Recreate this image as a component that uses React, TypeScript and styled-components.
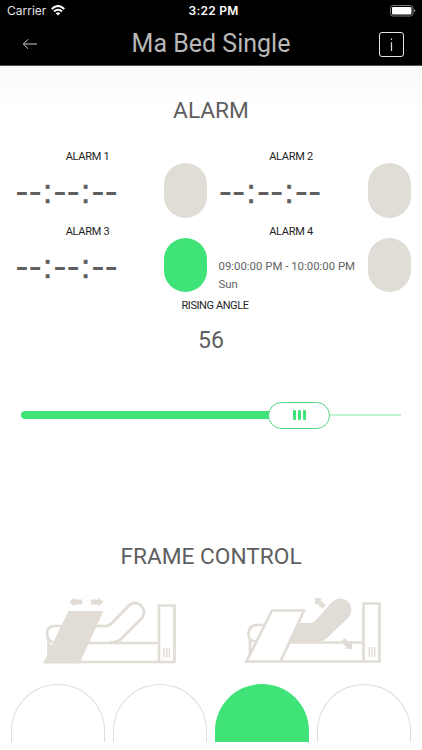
import React from 'react';
import styled, { createGlobalStyle } from 'styled-components';

const GREEN = '#40e378';
const STONE = '#e1dcd6';

const GlobalStyle = createGlobalStyle`
  * { box-sizing: border-box; }
  body { margin: 0; background: #fff; overflow: hidden; }
  button { appearance: none; padding: 0; margin: 0; border: 0; background: none; font: inherit; }
`;

const Screen = styled.div`
  width: 422px;
  height: 750px;
  display: flex;
  flex-direction: column;
  overflow: hidden;
  background: #fff;
  color: #5f5f5f;
  font-family: Roboto, 'Noto Sans', sans-serif;
`;

const Header = styled.header`
  height: 66px;
  flex: none;
  background: #000;
  color: #fff;
  border-bottom: 1px solid #555;
`;

const StatusBar = styled.div`
  height: 22px;
  display: grid;
  grid-template-columns: 1fr auto 1fr;
  align-items: center;
  padding: 0 6px 0 7px;
  font: 400 12px/22px Inter, sans-serif;
`;

const Carrier = styled.div`
  display: flex;
  align-items: center;
  gap: 5px;
  color: #e4e4e4;
  svg { margin-top: -1px; }
`;

const Clock = styled.div`
  font-weight: 600;
  font-size: 12px;
  letter-spacing: 0.24px;
  transform: translateX(2px);
`;

const Battery = styled.svg`
  justify-self: end;
`;

const NavBar = styled.div`
  height: 43px;
  display: grid;
  grid-template-columns: 60px 1fr 60px;
  align-items: center;
  padding-top: 1px;
`;

const BackButton = styled.button`
  display: flex;
  padding-left: 22px;
`;

const Title = styled.h1`
  margin: 0;
  text-align: center;
  color: #b8b8b8;
  font-weight: 400;
  font-size: 25px;
  line-height: 42px;
  white-space: nowrap;
`;

const InfoButton = styled.button`
  width: 25px;
  height: 25px;
  margin-left: 17px;
  display: flex;
  border: 1px solid #e6e6e6;
  border-radius: 3px;
`;

const Main = styled.main`
  flex: 1;
  display: flex;
  flex-direction: column;
  background: linear-gradient(#f9f9f9, #fff 38px);
`;

const Heading = styled.h2`
  margin: 0;
  height: 30px;
  text-align: center;
  font-weight: 400;
  font-size: 22.7px;
  line-height: 30px;
`;

const AlarmSection = styled.section`
  padding-top: 30px;
`;

const AlarmGrid = styled.div`
  display: grid;
  grid-template-columns: 203.5px 203.5px;
  grid-template-rows: 74.5px 74.5px;
  margin-top: 22px;
  padding-left: 7px;
`;

const Alarm = styled.div`
  display: grid;
  grid-template-columns: 157px 43px;
`;

const AlarmInfo = styled.div`
  display: flex;
  flex-direction: column;
`;

const Label = styled.div<{ $indent: number; $spacing: number }>`
  height: 16px;
  padding-left: ${(p) => p.$indent}px;
  text-align: center;
  color: #1e1e1e;
  font-size: 11px;
  line-height: 17.6px;
  letter-spacing: ${(p) => p.$spacing}px;
`;

const EmptyTime = styled.div`
  display: flex;
  margin: 8px 0 0 8.4px;
  height: 40px;
  line-height: 39px;
`;

const TimeGlyph = styled.span<{ $colon: boolean }>`
  width: ${(p) => (p.$colon ? 11.6 : 13.2)}px;
  display: flex;
  justify-content: center;
  font-family: ${(p) => (p.$colon ? "'Liberation Sans'" : "'DejaVu Sans'")}, sans-serif;
  font-size: ${(p) => (p.$colon ? 33 : 37)}px;
  -webkit-text-stroke: ${(p) => (p.$colon ? 0.6 : 0)}px #5f5f5f;
`;

const Schedule = styled.div`
  padding: 18px 0 0 8px;
  font-size: 11.4px;
  line-height: 18px;
  white-space: nowrap;
`;

const Toggle = styled.button<{ $on: boolean }>`
  width: 43px;
  height: 54.5px;
  margin-top: 15px;
  border-radius: 22px;
  background: ${(p) => (p.$on ? GREEN : '#e0dcd6')};
`;

const Rising = styled.section`
  margin-top: 0;
`;

const Angle = styled.div`
  height: 30px;
  margin-top: 13px;
  text-align: center;
  font-size: 23px;
  line-height: 30px;
`;

const Slider = styled.div`
  display: flex;
  align-items: center;
  height: 28px;
  margin: 45px 21px 0;
`;

const Filled = styled.div`
  width: 248px;
  height: 8px;
  margin-right: -1px;
  border-radius: 4px 0 0 4px;
  background: ${GREEN};
`;

const Handle = styled.div`
  width: 62px;
  height: 27px;
  display: flex;
  align-items: center;
  justify-content: center;
  gap: 2px;
  border: 1px solid #4fd581;
  border-radius: 14px;
  background: #fff;
`;

const Grip = styled.span`
  width: 3px;
  height: 10px;
  border-radius: 1px;
  background: ${GREEN};
`;

const Rest = styled.div`
  flex: 1;
  height: 2px;
  background: #c2f6d3;
`;

const FrameSection = styled.section`
  margin-top: 113px;
`;

const BedRow = styled.div`
  display: grid;
  grid-template-columns: 1fr 1fr;
  margin-top: 13px;
  height: 90px;
  svg { display: block; }
`;

const BedCell = styled.div<{ $left: number }>`
  padding-left: ${(p) => p.$left}px;
`;

const Presets = styled.div`
  display: grid;
  grid-template-columns: repeat(4, 94px);
  gap: 8px;
  height: 58.5px;
  margin: 8.5px 0 0 11.3px;
`;

const Preset = styled.button<{ $on: boolean }>`
  border: 1px solid ${(p) => (p.$on ? GREEN : '#e0ddda')};
  border-bottom: 0;
  border-radius: 47px 47px 0 0;
  background: ${(p) => (p.$on ? GREEN : '#fff')};
`;

const BedHead = () => (
  <svg width="160" height="90" viewBox="0 0 160 90">
    <g fill="none" stroke={STONE} strokeWidth="2.7">
      <path d="M32 41H25Q17 41 17 48Q17 56 23 57M64 41H75Q79 41 82 38L98.500 21C106 12 119 24 112 33L92 53Q88 57.500 80 57.500" />
      <path d="M18.500 52V76M55 58H129M46 77H144.500V20.500H129V77" />
    </g>
    <path fill={STONE} d="M38.500 26H73.500L49.500 78.500H13L18 69V57L22 60Z" />
    <path fill={STONE} d="M39 17l5-4.500v2h8v5h-8v2zM73 17l-5-4.500v2h-7.500v5H68v2z" transform="translate(.3 0)" />
    <path stroke={STONE} strokeWidth="1.400" d="M134 63v9.500M136.700 63v9.500M139.400 63v9.500" />
  </svg>
);

const BedBack = () => (
  <svg width="160" height="90" viewBox="0 0 160 90">
    <path fill={STONE} d="M65 38H74Q78 38 80 36L96 18C108 6 123 21 113 33L93 52Q88 57 82 57H54Z" />
    <g fill="none" stroke={STONE} strokeWidth="2.7">
      <path d="M29 40H22Q14 40 13.500 48Q13 56 20 56M15 53V69M54 57.500H128M47 76.500H144.500V18.500H128.500V76.500" />
      <path fill="#fff" d="M37 25.500H69L45.500 76.500H11.500Z" />
    </g>
    <path fill={STONE} d="M80 13l7.500.300-2 1.700 5.300 5.200-3.500 3.500-5.300-5.200-2 1.800zM117 64l-7.500-.300 2-1.800-5.500-5.400 3.500-3.500 5.500 5.400 2-1.900z" />
    <path stroke={STONE} strokeWidth="1.400" d="M134.300 62v10M137 62v10M139.700 62v10" />
  </svg>
);

const ALARMS = [
  { name: 'ALARM 1', on: false },
  { name: 'ALARM 2', on: false },
  { name: 'ALARM 3', on: true },
  { name: 'ALARM 4', on: false, time: '09:00:00 PM - 10:00:00 PM', days: 'Sun' },
];

export default function App() {
  return (
    <Screen>
      <GlobalStyle />
      <Header>
        <StatusBar>
          <Carrier>
            Carrier
            <svg width="14" height="11" viewBox="0 0 14 11">
              <g fill="none" stroke="#fff" strokeWidth="2">
                <path d="M.7 3.900Q7-1.900 13.300 3.900M3 6.500Q7 3 11 6.500" />
              </g>
              <path fill="#fff" d="M4.700 8.200Q7 6.500 9.300 8.200L7 10.500Z" />
            </svg>
          </Carrier>
          <Clock>3:22 PM</Clock>
          <Battery width="26" height="12" viewBox="0 0 26 12">
            <rect x=".5" y=".5" width="22.500" height="10.500" rx="2.500" fill="none" stroke="#777" />
            <rect x="2" y="2" width="19.500" height="7.500" rx="1" fill="#fff" />
            <path fill="#777" d="M24 4q1.500.5 1.500 1.800T24 7.600z" />
          </Battery>
        </StatusBar>
        <NavBar>
          <BackButton aria-label="Back">
            <svg width="16" height="12" viewBox="0 0 16 12" fill="none" stroke="#ccc">
              <path d="M15 6H1.500M6 1.300L1.300 6L6 10.700" />
            </svg>
          </BackButton>
          <Title>Ma Bed Single</Title>
          <InfoButton aria-label="Information">
            <svg width="23" height="23" viewBox="0 0 23 23">
              <path stroke="#ddd" strokeWidth="1.200" d="M11.500 9.300V18M11.500 5.500V7" />
            </svg>
          </InfoButton>
        </NavBar>
      </Header>
      <Main>
        <AlarmSection>
          <Heading>ALARM</Heading>
          <AlarmGrid>
            {ALARMS.map((a) => (
              <Alarm key={a.name}>
                <AlarmInfo>
                  <Label $indent={4} $spacing={-0.3}>{a.name}</Label>
                  {a.time ? (
                    <Schedule>
                      <div>{a.time}</div>
                      <div>{a.days}</div>
                    </Schedule>
                  ) : (
                    <EmptyTime>
                      {'--:--:--'.split('').map((c, i) => (
                        <TimeGlyph key={i} $colon={c === ':'}>{c}</TimeGlyph>
                      ))}
                    </EmptyTime>
                  )}
                </AlarmInfo>
                <Toggle $on={a.on} aria-label={a.name} />
              </Alarm>
            ))}
          </AlarmGrid>
        </AlarmSection>
        <Rising>
          <Label $indent={8} $spacing={-0.42}>RISING ANGLE</Label>
          <Angle>56</Angle>
          <Slider>
            <Filled />
            <Handle><Grip /><Grip /><Grip /></Handle>
            <Rest />
          </Slider>
        </Rising>
        <FrameSection>
          <Heading>FRAME CONTROL</Heading>
          <BedRow>
            <BedCell $left={30}><BedHead /></BedCell>
            <BedCell $left={24}><BedBack /></BedCell>
          </BedRow>
          <Presets>
            {[false, false, true, false].map((on, i) => (
              <Preset key={i} $on={on} aria-label={`Preset ${i + 1}`} />
            ))}
          </Presets>
        </FrameSection>
      </Main>
    </Screen>
  );
}
